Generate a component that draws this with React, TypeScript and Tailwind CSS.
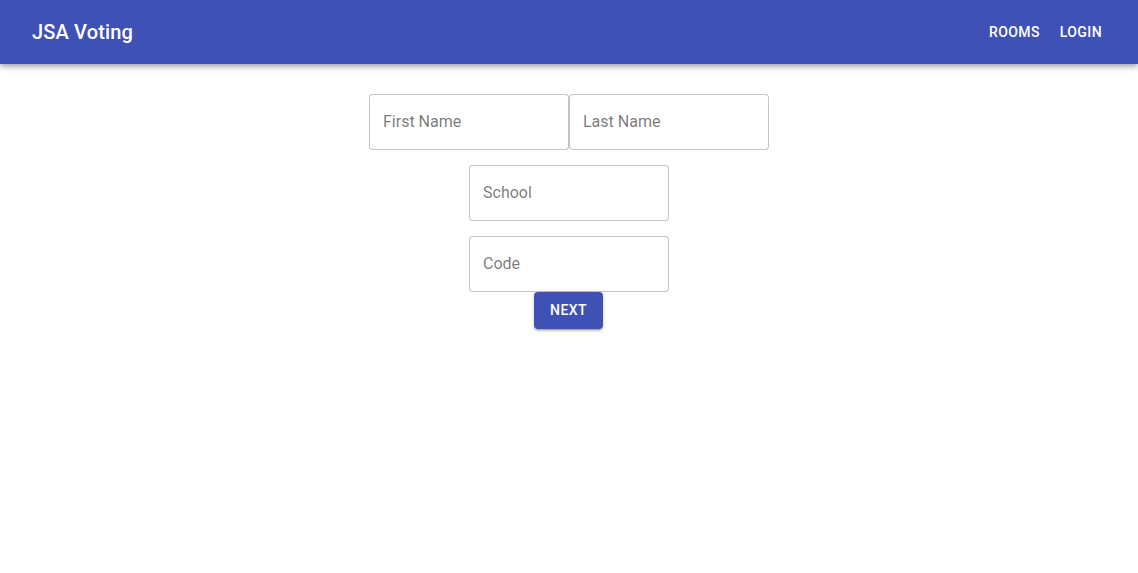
import React from "react";

const inputClass =
  "w-[200px] h-[56px] px-[13px] pb-[2px] text-[16px] text-[rgba(0,0,0,0.87)] placeholder:text-[rgba(0,0,0,0.54)] border border-[rgba(0,0,0,0.23)] rounded-[4px] outline-none bg-white";

export default function App() {
  return (
    <div className="min-h-[573px] bg-white font-['Roboto',sans-serif]">
      <header className="h-16 bg-[#3f51b5] text-white flex items-center justify-between pl-8 pr-[28px] shadow-[0_2px_4px_-1px_rgba(0,0,0,0.2),0_4px_5px_0_rgba(0,0,0,0.14),0_1px_10px_0_rgba(0,0,0,0.12)] relative">
        <h1 className="text-[20px] font-medium tracking-[0.0075em]">JSA Voting</h1>
        <nav className="flex gap-[4px]">
          <button className="px-2 py-[6px] text-[14px] font-medium uppercase tracking-[0.02857em]">
            Rooms
          </button>
          <button className="px-2 py-[6px] text-[14px] font-medium uppercase tracking-[0.02857em]">
            Login
          </button>
        </nav>
      </header>

      <form className="flex flex-col items-center pt-[30px]">
        <div className="flex">
          <input className={inputClass} placeholder="First Name" />
          <input className={inputClass} placeholder="Last Name" />
        </div>
        <input className={`${inputClass} mt-[15px]`} placeholder="School" />
        <input className={`${inputClass} mt-[15px]`} placeholder="Code" />
        <button
          type="button"
          className="h-[37px] w-[69px] -ml-[1px] bg-[#3f51b5] text-white text-[14px] font-medium uppercase tracking-[0.02857em] rounded-[4px] shadow-[0_3px_1px_-2px_rgba(0,0,0,0.2),0_2px_2px_0_rgba(0,0,0,0.14),0_1px_5px_0_rgba(0,0,0,0.12)]"
        >
          Next
        </button>
      </form>
    </div>
  );
}
